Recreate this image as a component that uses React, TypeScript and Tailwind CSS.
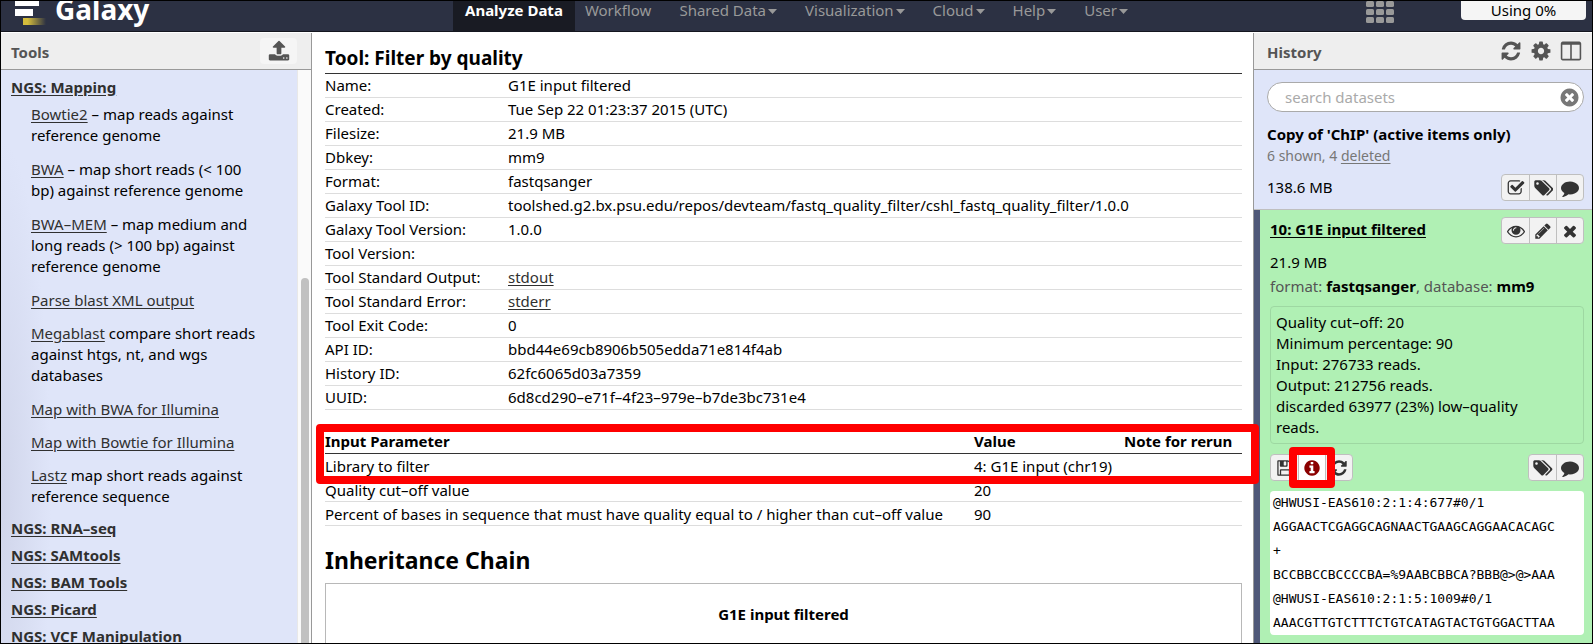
import React from "react";

const ICONS = {
  refresh:
    "M1639 1056q0 5-1 7-64 268-268 434.5t-478 166.5q-146 0-282.5-55t-243.5-157l-129 129q-19 19-45 19t-45-19-19-45v-448q0-26 19-45t45-19h448q26 0 45 19t19 45-19 45l-137 137q71 66 161 102t187 36q134 0 250-65t186-179q11-17 53-117 8-23 30-23h192q13 0 22.5 9.5t9.5 22.5zm25-800v448q0 26-19 45t-45 19h-448q-26 0-45-19t-19-45 19-45l138-138q-148-137-349-137-134 0-250 65t-186 179q-11 17-53 117-8 23-30 23h-199q-13 0-22.5-9.5t-9.5-22.5v-7q65-268 270-434.5t480-166.5q146 0 284 55.5t245 156.5l130-129q19-19 45-19t45 19 19 45z",
  cog: "M1152 896q0-106-75-181t-181-75-181 75-75 181 75 181 181 75 181-75 75-181zm512-109v222q0 12-8 23t-20 13l-185 28q-19 54-39 91 35 50 107 138 10 12 10 25t-9 23q-27 37-99 108t-94 71q-12 0-26-9l-138-108q-44 23-91 38-16 136-29 186-7 28-36 28h-222q-14 0-24.5-8.5t-11.5-21.5l-28-184q-49-16-90-37l-141 107q-10 9-25 9-14 0-25-11-126-114-165-168-7-10-7-23 0-12 8-23 15-21 51-66.5t54-70.5q-27-50-41-99l-183-27q-13-2-21-12.5t-8-23.5v-222q0-12 8-23t19-13l186-28q14-46 39-92-40-57-107-138-10-12-10-24 0-10 9-23 26-36 98.5-107.5t94.5-71.5q13 0 26 10l138 107q44-23 91-38 16-136 29-186 7-28 36-28h222q14 0 24.5 8.5t11.5 21.5l28 184q49 16 90 37l142-107q9-9 24-9 13 0 25 10 129 119 165 170 7 8 7 22 0 12-8 23-15 21-51 66.5t-54 70.5q26 50 41 98l183 28q13 2 21 12.5t8 23.5z",
  columns:
    "M224 1536h608v-1152h-640v1120q0 13 9.5 22.5t22.5 9.5zm1376-32v-1120h-640v1152h608q13 0 22.5-9.5t9.5-22.5zm128-1216v1216q0 66-47 113t-113 47h-1344q-66 0-113-47t-47-113v-1216q0-66 47-113t113-47h1344q66 0 113 47t47 113z",
  clear:
    "M1277 1122q0-26-19-45l-181-181 181-181q19-19 19-45 0-27-19-46l-90-90q-19-19-46-19-26 0-45 19l-181 181-181-181q-19-19-45-19-27 0-46 19l-90 90q-19 19-19 46 0 26 19 45l181 181-181 181q-19 19-19 45 0 27 19 46l90 90q19 19 46 19 26 0 45-19l181-181 181 181q19 19 45 19 27 0 46-19l90-90q19-19 19-46zm387-226q0 209-103 385.5t-279.5 279.5-385.5 103-385.5-103-279.5-279.5-103-385.5 103-385.5 279.5-279.5 385.5-103 385.5 103 279.5 279.5 103 385.5z",
  check:
    "M1472 930v318q0 119-84.5 203.5t-203.5 84.5h-832q-119 0-203.5-84.5t-84.5-203.5v-832q0-119 84.5-203.5t203.5-84.5h832q63 0 117 25 15 7 18 23 3 17-9 29l-49 49q-10 10-23 10-3 0-9-2-23-6-45-6h-832q-66 0-113 47t-47 113v832q0 66 47 113t113 47h832q66 0 113-47t47-113v-254q0-13 9-22l64-64q10-10 23-10 6 0 12 3 20 8 20 29zm231-489l-814 814q-24 24-57 24t-57-24l-430-430q-24-24-24-57t24-57l110-110q24-24 57-24t57 24l263 263 647-647q24-24 57-24t57 24l110 110q24 24 24 57t-24 57z",
  tags: "M576 448q0-53-37.5-90.5t-90.5-37.5-90.5 37.5-37.5 90.5 37.5 90.5 90.5 37.5 90.5-37.5 37.5-90.5zm1067 576q0 53-37 90l-491 492q-39 37-91 37-53 0-90-37l-715-716q-38-37-64.5-101t-26.5-117v-416q0-52 38-90t90-38h416q53 0 117 26.5t102 64.5l715 714q37 39 37 91zm384 0q0 53-37 90l-491 492q-39 37-91 37-36 0-59-14t-53-45l470-470q37-37 37-90 0-52-37-91l-715-714q-38-38-102-64.5t-117-26.5h224q53 0 117 26.5t102 64.5l715 714q37 39 37 91z",
  comment:
    "M1792 896q0 174-120 321.5t-326 233-450 85.5q-70 0-145-8-198 175-460 242-49 14-114 22-17 2-30.5-9t-17.5-29v-1q-3-4-.5-12t2-10 4.5-9.5l6-9 7-8.5 8-9q7-8 31-34.5t34.5-38 31-39.5 32.5-51 27-59 26-76q-157-89-247.5-220t-90.5-281q0-130 71-248.5t191-204.5 286-136.5 348-50.5q244 0 450 85.5t326 233 120 321.5z",
  eye: "M1664 960q-152-236-381-353 61 104 61 225 0 185-131.5 316.5t-316.5 131.5-316.5-131.5-131.5-316.5q0-121 61-225-229 117-381 353 133 205 333.5 326.5t434.5 121.5 434.5-121.5 333.5-326.5zm-720-384q0-20-14-34t-34-14q-125 0-214.5 89.5t-89.5 214.5q0 20 14 34t34 14 34-14 14-34q0-86 61-147t147-61q20 0 34-14t14-34zm848 384q0 34-20 69-140 230-376.5 368.5t-499.5 138.5-499.5-139-376.5-368q-20-35-20-69t20-69q140-229 376.5-368t499.5-139 499.5 139 376.5 368q20 35 20 69z",
  pencil:
    "M491 1536l91-91-235-235-91 91v107h128v128h107zm523-928q0-22-22-22-10 0-17 7l-542 542q-7 7-7 17 0 22 22 22 10 0 17-7l542-542q7-7 7-17zm-54-192l416 416-832 832h-416v-416zm683 96q0 53-37 90l-166 166-416-416 166-165q36-38 90-38 53 0 91 38l235 234q37 39 37 91z",
  times:
    "M1490 1322q0 40-28 68l-136 136q-28 28-68 28t-68-28l-294-294-294 294q-28 28-68 28t-68-28l-136-136q-28-28-28-68t28-68l294-294-294-294q-28-28-28-68t28-68l136-136q28-28 68-28t68 28l294 294 294-294q28-28 68-28t68 28l136 136q28 28 28 68t-28 68l-294 294 294 294q28 28 28 68z",
  save: "M512 1536h768v-384h-768v384zm896 0h128v-896q0-14-10-38.5t-20-34.5l-281-281q-10-10-34-20t-39-10v416q0 40-28 68t-68 28h-576q-40 0-68-28t-28-68v-416h-128v1280h128v-416q0-40 28-68t68-28h832q40 0 68 28t28 68v416zm-384-928v-320q0-13-9.5-22.5t-22.5-9.5h-192q-13 0-22.5 9.5t-9.5 22.5v320q0 13 9.5 22.5t22.5 9.5h192q13 0 22.5-9.5t9.5-22.5zm640 32v928q0 40-28 68t-68 28h-1344q-40 0-68-28t-28-68v-1344q0-40 28-68t68-28h928q40 0 88 20t76 48l280 280q28 28 48 76t20 88z",
  info: "M1152 1376v-160q0-14-9-23t-23-9h-96v-512q0-14-9-23t-23-9h-320q-14 0-23 9t-9 23v160q0 14 9 23t23 9h96v320h-96q-14 0-23 9t-9 23v160q0 14 9 23t23 9h448q14 0 23-9t9-23zm-128-896v-160q0-14-9-23t-23-9h-192q-14 0-23 9t-9 23v160q0 14 9 23t23 9h192q14 0 23-9t9-23zm640 416q0 209-103 385.5t-279.5 279.5-385.5 103-385.5-103-279.5-279.5-103-385.5 103-385.5 279.5-279.5 385.5-103 385.5 103 279.5 279.5 103 385.5z",
  upload:
    "M1344 1472q0-26-19-45t-45-19-45 19-19 45 19 45 45 19 45-19 19-45zm256 0q0-26-19-45t-45-19-45 19-19 45 19 45 45 19 45-19 19-45zm128-224v320q0 40-28 68t-68 28h-1472q-40 0-68-28t-28-68v-320q0-40 28-68t68-28h427q21 56 70.5 92t110.5 36h256q61 0 110.5-36t70.5-92h427q40 0 68 28t28 68zm-325-648q-17 40-59 40h-256v448q0 26-19 45t-45 19h-256q-26 0-45-19t-19-45v-448h-256q-42 0-59-40-17-39 14-69l448-448q18-19 45-19t45 19l448 448q31 30 14 69z",
};

type IconName = keyof typeof ICONS;

function Icon({ name, className = "h-[18px]" }: { name: IconName; className?: string }) {
  return (
    <svg
      viewBox={name === "tags" ? "0 0 2048 1792" : "0 0 1792 1792"}
      className={`${className} w-auto shrink-0`}
      fill="currentColor"
      aria-hidden="true"
    >
      <path d={ICONS[name]} />
    </svg>
  );
}

const NAV = [
  { label: "Workflow" },
  { label: "Shared Data", menu: true },
  { label: "Visualization", menu: true },
  { label: "Cloud", menu: true },
  { label: "Help", menu: true },
  { label: "User", menu: true },
];

function Masthead() {
  return (
    <header className="flex h-[31px] shrink-0 items-start border-b border-[#14161f] bg-[#2c3143]">
      <div className="flex w-[452px] shrink-0 items-start pl-3.5">
        <svg width="34" height="24" viewBox="0 0 34 24" aria-hidden="true">
          <defs>
            <linearGradient id="gold" x1="0" x2="1">
              <stop offset="0.2" stopColor="#d5bd3c" />
              <stop offset="1" stopColor="#d5bd3c" stopOpacity="0" />
            </linearGradient>
          </defs>
          <rect x="0" y="0" width="24" height="5" fill="#fff" />
          <rect x="0" y="8" width="18" height="7" fill="#fff" />
          <rect x="8" y="17" width="23" height="7" fill="url(#gold)" />
        </svg>
        <span className="-mt-2 ml-1.5 text-[28px] leading-8 font-bold text-white">Galaxy</span>
      </div>
      <nav className="flex h-[30px] flex-1 text-[15px] leading-[18px] text-[#999]">
        <a href="#analyze" className="mr-2.5 h-full bg-[#191b23] px-3 font-bold whitespace-nowrap text-white">
          Analyze Data
        </a>
        <div className="flex gap-7">
          {NAV.map((item) => (
            <a key={item.label} href="#menu" className="flex items-start whitespace-nowrap">
              {item.label}
              {item.menu && (
                <svg width="9" height="5" viewBox="0 0 9 5" className="mt-2 ml-0.5" fill="currentColor" aria-hidden="true">
                  <path d="M0 0h9L4.500 5z" />
                </svg>
              )}
            </a>
          ))}
        </div>
      </nav>
      <button aria-label="Applications" className="mr-[67px] text-[#999]">
        <svg width="28" height="23" viewBox="0 0 28 23" fill="currentColor" aria-hidden="true">
          {[0, 10, 20].map((x) =>
            [0, 8, 16].map((y) => <rect key={`${x}-${y}`} x={x} y={y} width="8" height="6" rx="1.5" />),
          )}
        </svg>
      </button>
      <div className="mr-1.5 h-[19px] w-[125px] rounded-b-sm bg-[#f5f5f5] text-center text-[15px] leading-[18px] text-black">
        Using 0%
      </div>
    </header>
  );
}

function PanelHeader({ title, className, children }: { title: string; className: string; children: React.ReactNode }) {
  return (
    <div
      className={`flex h-[37px] shrink-0 items-center justify-between border-b border-[#999] bg-[#eee] text-[#555] ${className}`}
    >
      <h2 className="pt-0.5 text-[15px] font-bold">{title}</h2>
      {children}
    </div>
  );
}

const TOOLS: { link: string; text?: string }[] = [
  { link: "Bowtie2", text: " – map reads against reference genome" },
  { link: "BWA", text: " – map short reads (< 100 bp) against reference genome" },
  { link: "BWA–MEM", text: " – map medium and long reads (> 100 bp) against reference genome" },
  { link: "Parse blast XML output" },
  { link: "Megablast", text: " compare short reads against htgs, nt, and wgs databases" },
  { link: "Map with BWA for Illumina" },
  { link: "Map with Bowtie for Illumina" },
  { link: "Lastz", text: " map short reads against reference sequence" },
];

const SECTIONS = ["NGS: RNA–seq", "NGS: SAMtools", "NGS: BAM Tools", "NGS: Picard", "NGS: VCF Manipulation"];

function ToolPanel() {
  return (
    <aside className="flex w-[311px] shrink-0 flex-col border-r border-[#999]">
      <PanelHeader title="Tools" className="pr-3.5 pl-2.5">
        <button aria-label="Upload data" className="flex h-[26px] w-[37px] items-center justify-center rounded-sm bg-[#f5f5f5]">
          <Icon name="upload" className="h-[22px]" />
        </button>
      </PanelHeader>
      <div className="flex min-h-0 flex-1 bg-[#dfe5f9]">
        <div className="min-w-0 flex-1 overflow-hidden bg-[radial-gradient(ellipse_50px_360px_at_0_75%,#d0d5ea,#dfe5f9)] pt-1 pl-2.5 text-[15px] leading-[21px] text-black">
          <a href="#mapping" className="block leading-[27px] font-bold text-[#303030] underline underline-offset-2">
            NGS: Mapping
          </a>
          <ul className="pt-[3px] pr-8 pb-1.5 pl-5">
            {TOOLS.map((tool) => (
              <li key={tool.link} className={tool.text ? "pb-[13px] last:pb-0.5" : "pb-3"}>
                <a href="#tool" className="text-[#303030] underline underline-offset-2">
                  {tool.link}
                </a>
                {tool.text}
              </li>
            ))}
          </ul>
          {SECTIONS.map((name) => (
            <a key={name} href="#section" className="block leading-[27px] font-bold text-[#303030] underline underline-offset-2">
              {name}
            </a>
          ))}
        </div>
        <div className="flex w-3.5 shrink-0 justify-center border-l border-[#e8e8e8] bg-[#fafafa] pt-52">
          <div className="w-2 rounded-t-full bg-[#c1c1c1]" />
        </div>
      </div>
    </aside>
  );
}

const DETAILS: [string, React.ReactNode][] = [
  ["Name:", "G1E input filtered"],
  ["Created:", "Tue Sep 22 01:23:37 2015 (UTC)"],
  ["Filesize:", "21.9 MB"],
  ["Dbkey:", "mm9"],
  ["Format:", "fastqsanger"],
  ["Galaxy Tool ID:", "toolshed.g2.bx.psu.edu/repos/devteam/fastq_quality_filter/cshl_fastq_quality_filter/1.0.0"],
  ["Galaxy Tool Version:", "1.0.0"],
  ["Tool Version:", ""],
  ["Tool Standard Output:", <a href="#stdout" className="text-[#303030] underline underline-offset-2">stdout</a>],
  ["Tool Standard Error:", <a href="#stderr" className="text-[#303030] underline underline-offset-2">stderr</a>],
  ["Tool Exit Code:", "0"],
  ["API ID:", "bbd44e69cb8906b505edda71e814f4ab"],
  ["History ID:", "62fc6065d03a7359"],
  ["UUID:", "6d8cd290–e71f–4f23–979e–b7de3bc731e4"],
];

const PARAMS = [
  ["Library to filter", "4: G1E input (chr19)"],
  ["Quality cut–off value", "20"],
  ["Percent of bases in sequence that must have quality equal to / higher than cut–off value", "90"],
];

function DatasetDetails() {
  return (
    <main className="min-w-0 flex-1 pt-2.5 pr-[11px] pl-[13px] text-[15px] text-black">
      <table className="w-full table-fixed border-collapse leading-[22px]">
        <colgroup>
          <col className="w-[183px]" />
          <col />
        </colgroup>
        <thead>
          <tr className="h-[30px] border-b border-[#333]">
            <th colSpan={2} className="text-left align-middle text-[19px] font-bold">
              Tool: Filter by quality
            </th>
          </tr>
        </thead>
        <tbody>
          {DETAILS.map(([label, value]) => (
            <tr key={label} className="h-6 border-b border-[#ddd]">
              <td className="whitespace-nowrap">{label}</td>
              <td className="whitespace-nowrap">{value}</td>
            </tr>
          ))}
        </tbody>
      </table>

      <div className="relative mt-5">
        <table className="w-full table-fixed border-collapse leading-[22px]">
          <colgroup>
            <col />
            <col className="w-[150px]" />
            <col className="w-[118px]" />
          </colgroup>
          <thead>
            <tr className="h-6 border-b border-[#333] text-left">
              <th className="font-bold">Input Parameter</th>
              <th className="font-bold">Value</th>
              <th className="font-bold whitespace-nowrap">Note for rerun</th>
            </tr>
          </thead>
          <tbody>
            {PARAMS.map(([label, value]) => (
              <tr key={label} className="h-6 border-b border-[#ddd]">
                <td className="whitespace-nowrap">{label}</td>
                <td className="whitespace-nowrap">{value}</td>
                <td />
              </tr>
            ))}
          </tbody>
        </table>
        <div className="pointer-events-none absolute -top-1.5 -right-[17px] -left-[9px] z-10 h-[60px] rounded-sm border-8 border-[#ff0000]" />
      </div>

      <h1 className="mt-4 text-[23px] leading-9 font-bold">Inheritance Chain</h1>
      <div className="mt-[5px] h-40 border border-[#b8b8b8] pt-[18px] text-center leading-6 font-bold">
        G1E input filtered
      </div>
    </main>
  );
}

function ButtonGroup({ items }: { items: { icon: IconName; label: string; marked?: boolean }[] }) {
  return (
    <div className="flex h-[27px] rounded-sm border border-[#bfbfbf] bg-[#f2f2f2] text-[#333]">
      {items.map((item, i) => (
        <button
          key={item.label}
          aria-label={item.label}
          className={`relative flex w-[27px] items-center justify-center ${i > 0 ? "border-l border-[#bfbfbf]" : ""} ${
            item.marked ? "z-10 bg-white text-[#8b0000]" : ""
          }`}
        >
          <Icon name={item.icon} />
          {item.marked && (
            <span className="pointer-events-none absolute -inset-x-2.5 -inset-y-2 rounded-sm border-8 border-[#ff0000]" />
          )}
        </button>
      ))}
    </div>
  );
}

const PEEK = [
  "@HWUSI-EAS610:2:1:4:677#0/1",
  "AGGAACTCGAGGCAGNAACTGAAGCAGGAACACAGC",
  "+",
  "BCCBBCCBCCCCBA=%9AABCBBCA?BBB@>@>AAA",
  "@HWUSI-EAS610:2:1:5:1009#0/1",
  "AAACGTTGTCTTTCTGTCATAGTACTGTGGACTTAA",
];

function HistoryPanel() {
  return (
    <aside className="flex w-[339px] shrink-0 flex-col border-l border-[#999] bg-[#dfe5f9] text-[15px] text-black">
      <PanelHeader title="History" className="pr-2.5 pl-[13px]">
        <div className="flex items-center gap-2">
          <button aria-label="Refresh history"><Icon name="refresh" className="h-[22px]" /></button>
          <button aria-label="History options"><Icon name="cog" className="h-[22px]" /></button>
          <button aria-label="View all histories"><Icon name="columns" className="h-[22px]" /></button>
        </div>
      </PanelHeader>
      <div className="h-[140px] shrink-0 border-b border-[#bfbfbf] pt-3 pr-2 pl-[13px]">
        <div className="flex h-[30px] items-center rounded-full border border-[#aaa] bg-white pr-[3px] pl-[17px]">
          <input
            type="text"
            aria-label="search datasets"
            placeholder="search datasets"
            className="min-w-0 flex-1 bg-transparent outline-none placeholder:text-[#aaa]"
          />
          <button aria-label="Clear search" className="text-[#777]">
            <Icon name="clear" className="h-[21px]" />
          </button>
        </div>
        <h3 className="mt-2.5 leading-6 font-bold">Copy of 'ChIP' (active items only)</h3>
        <p className="text-[14px] leading-5 text-[#777]">
          6 shown, 4 <a href="#deleted" className="underline underline-offset-2">deleted</a>
        </p>
        <div className="mt-2 flex items-center justify-between">
          <span>138.6 MB</span>
          <ButtonGroup
            items={[
              { icon: "check", label: "Select datasets" },
              { icon: "tags", label: "Edit history tags" },
              { icon: "comment", label: "Edit history annotation" },
            ]}
          />
        </div>
      </div>
      <section className="min-h-0 flex-1 border-l-[6px] border-[#4f5878] bg-[#b0f0b4] pt-[7px] pr-2 pl-2.5">
        <div className="flex items-start justify-between">
          <a href="#dataset" className="leading-6 font-bold underline underline-offset-2">10: G1E input filtered</a>
          <ButtonGroup
            items={[
              { icon: "eye", label: "View data" },
              { icon: "pencil", label: "Edit attributes" },
              { icon: "times", label: "Delete" },
            ]}
          />
        </div>
        <div className="mt-1.5 leading-6">21.9 MB</div>
        <div className="leading-6 whitespace-nowrap text-[#555]">
          format: <b className="text-black">fastqsanger</b>, database: <b className="text-black">mm9</b>
        </div>
        <div className="mt-2 rounded-sm border border-[#9ed8a2] py-[5px] pr-6 pl-[5px] leading-[21px]">
          Quality cut–off: 20
          <br />
          Minimum percentage: 90
          <br />
          Input: 276733 reads.
          <br />
          Output: 212756 reads.
          <br />
          discarded 63977 (23%) low–quality reads.
        </div>
        <div className="mt-2.5 flex justify-between">
          <ButtonGroup
            items={[
              { icon: "save", label: "Download" },
              { icon: "info", label: "View details", marked: true },
              { icon: "refresh", label: "Run this job again" },
            ]}
          />
          <ButtonGroup
            items={[
              { icon: "tags", label: "Edit dataset tags" },
              { icon: "comment", label: "Edit dataset annotation" },
            ]}
          />
        </div>
        <pre className="mt-2.5 overflow-hidden rounded-sm bg-white pl-[3px] font-['DejaVu_Sans_Mono',monospace] text-[13px] leading-6">
          {PEEK.join("\n")}
        </pre>
      </section>
    </aside>
  );
}

export default function App() {
  return (
    <div className="flex h-screen flex-col overflow-hidden border border-black bg-white font-['Noto_Sans',sans-serif]">
      <Masthead />
      <div className="flex min-h-0 flex-1 pt-px">
        <ToolPanel />
        <DatasetDetails />
        <HistoryPanel />
      </div>
    </div>
  );
}
